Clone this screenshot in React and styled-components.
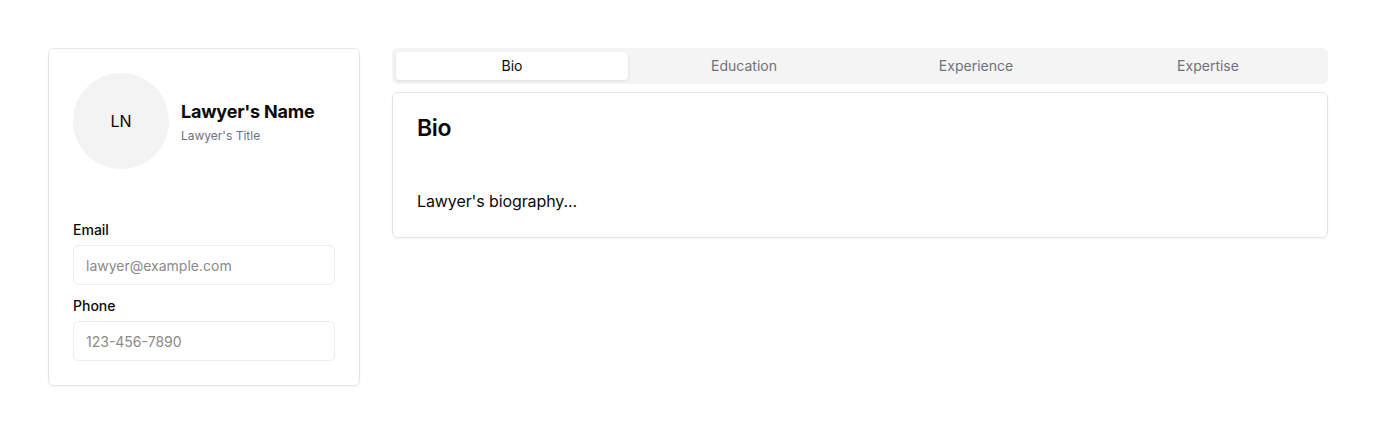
import styled, { createGlobalStyle } from 'styled-components';

const GlobalStyle = createGlobalStyle`
  body {
    margin: 0;
    background: #ffffff;
    font-family: 'Inter', 'Liberation Sans', sans-serif;
    color: #0a0a0a;
  }
  * { box-sizing: border-box; }
`;

const tabs = ['Bio', 'Education', 'Experience', 'Expertise'];

export default function App() {
  return (
    <>
      <GlobalStyle />
      <Page>
        <ProfileCard>
          <Header>
            <Avatar>LN</Avatar>
            <div>
              <Name>Lawyer's Name</Name>
              <Title>Lawyer's Title</Title>
            </div>
          </Header>
          <Field>
            <Label>Email</Label>
            <Input placeholder="lawyer@example.com" />
          </Field>
          <Field>
            <Label>Phone</Label>
            <Input placeholder="123-456-7890" />
          </Field>
        </ProfileCard>
        <Main>
          <TabList>
            {tabs.map((t, i) => (
              <Tab key={t} $active={i === 0}>
                {t}
              </Tab>
            ))}
          </TabList>
          <ContentCard>
            <CardTitle>Bio</CardTitle>
            <CardText>Lawyer's biography...</CardText>
          </ContentCard>
        </Main>
      </Page>
    </>
  );
}

const Page = styled.div`
  display: grid;
  grid-template-columns: 1fr 3fr;
  gap: 32px;
  width: 1280px;
  margin: 48px;
  align-items: start;
`;

const ProfileCard = styled.div`
  border: 1px solid #e5e5e5;
  border-radius: 6px;
  padding: 24px;
  box-shadow: 0 1px 2px rgba(0, 0, 0, 0.05);
`;

const Header = styled.div`
  display: flex;
  align-items: center;
  gap: 12px;
  margin-bottom: 54px;
`;

const Avatar = styled.div`
  width: 96px;
  height: 96px;
  border-radius: 50%;
  background: #f3f3f3;
  display: flex;
  align-items: center;
  justify-content: center;
  font-size: 16px;
  color: #0a0a0a;
`;

const Name = styled.h2`
  margin: 2px 0 4px;
  font-size: 18px;
  line-height: 24px;
  font-weight: 700;
  letter-spacing: -0.2px;
`;

const Title = styled.p`
  margin: 0;
  font-size: 12px;
  line-height: 16px;
  color: #6b7280;
`;

const Field = styled.div`
  display: flex;
  flex-direction: column;
  & + & {
    margin-top: 14px;
  }
`;

const Label = styled.label`
  font-size: 14px;
  line-height: 14px;
  font-weight: 500;
  margin-bottom: 8px;
`;

const Input = styled.input`
  height: 40px;
  border: 1px solid #ececec;
  border-radius: 6px;
  padding: 0 12px;
  font-family: 'Inter', sans-serif;
  font-size: 14px;
  color: #0a0a0a;
  background: #fff;
  outline: none;
  &::placeholder {
    color: #8a8a8a;
  }
`;

const Main = styled.div`
  display: flex;
  flex-direction: column;
  gap: 8px;
`;

const TabList = styled.div`
  display: grid;
  grid-template-columns: repeat(4, 1fr);
  background: #f4f4f5;
  border-radius: 6px;
  padding: 4px;
  height: 36px;
`;

const Tab = styled.button`
  border: none;
  border-radius: 4px;
  height: 28px;
  padding: 0 0 1px;
  font-family: 'Inter', sans-serif;
  font-size: 14px;
  line-height: 20px;
  font-weight: 400;
  color: ${(p) => (p.$active ? '#0a0a0a' : '#71717a')};
  background: ${(p) => (p.$active ? '#ffffff' : 'transparent')};
  box-shadow: ${(p) => (p.$active ? '0 1px 3px rgba(0,0,0,0.1)' : 'none')};
  cursor: pointer;
`;

const ContentCard = styled.div`
  border: 1px solid #e5e5e5;
  border-radius: 6px;
  padding: 23px 24px 24px;
  box-shadow: 0 1px 2px rgba(0, 0, 0, 0.05);
`;

const CardTitle = styled.h3`
  margin: 0 0 49px;
  font-size: 23px;
  line-height: 24px;
  font-weight: 600;
  letter-spacing: -0.3px;
`;

const CardText = styled.p`
  margin: 0;
  font-size: 16px;
  line-height: 24px;
  letter-spacing: -0.1px;
`;
